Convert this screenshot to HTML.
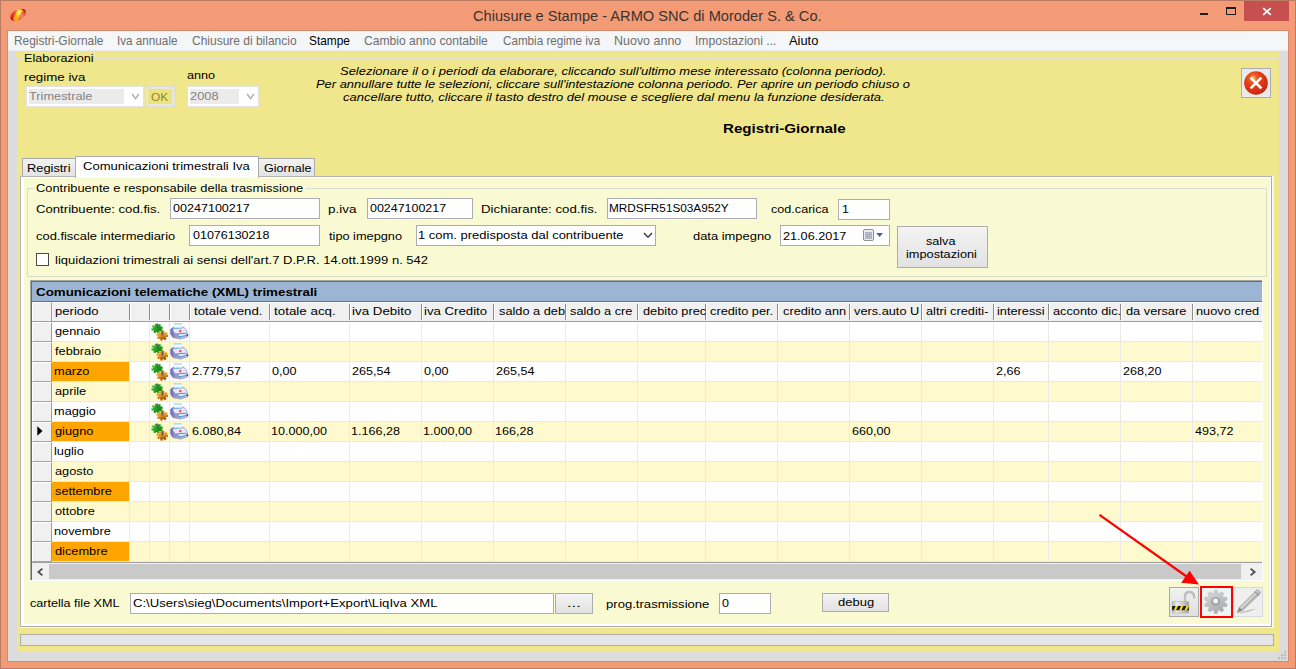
<!DOCTYPE html>
<html><head><meta charset="utf-8"><title>Chiusure e Stampe</title>
<style>
html,body{margin:0;padding:0;}
body{width:1296px;height:669px;overflow:hidden;position:relative;background:#F29B76;font-family:"Liberation Sans", sans-serif;}
body div,body svg{position:absolute;box-sizing:border-box;}
.t{position:absolute;white-space:nowrap;transform-origin:0 50%;}
</style></head><body>
<div style="left:0px;top:0px;width:1296px;height:669px;background:#F29B76;border:1px solid #B97C62;"></div>
<div style="left:7px;top:30px;width:1282px;height:632px;background:#D9896A;"></div>
<div style="left:8px;top:31px;width:1280px;height:20px;background:#F5F6F8;border-bottom:1px solid #E9EAEC;"></div>
<div style="left:8px;top:51px;width:1280px;height:610px;background:#DCDCDC;"></div>
<div style="left:16px;top:51px;width:1264px;height:601px;background:#F0E68C;"></div>
<div style="left:1244px;top:1px;width:45px;height:20px;background:#C84F4F;"></div>
<svg style="left:1262px;top:7px" width="10" height="9" viewBox="0 0 10 9"><path d="M1.2 1.2 L8.8 7.8 M8.8 1.2 L1.2 7.8" stroke="#fff" stroke-width="1.7" fill="none"/></svg>
<div style="left:1226px;top:7px;width:10px;height:8px;border:1px solid #1E1E1E;border-top-width:2px;"></div>
<div style="left:1200px;top:13px;width:8px;height:2px;background:#1E1E1E;"></div>
<svg style="left:8px;top:6px" width="20" height="18" viewBox="8 6 20 18"><defs><linearGradient id="ai1" x1="0" y1="0" x2="1" y2="0"><stop offset="0" stop-color="#E01C1C"/><stop offset="0.35" stop-color="#F04830"/><stop offset="0.7" stop-color="#F28A6A"/><stop offset="1" stop-color="#E22020"/></linearGradient><radialGradient id="ai2" cx="0.62" cy="0.3" r="0.6"><stop offset="0" stop-color="#FFFDE0"/><stop offset="0.3" stop-color="#FFDC20"/><stop offset="1" stop-color="#F8A818"/></radialGradient></defs><ellipse cx="18.1" cy="14.9" rx="8.3" ry="5.3" transform="rotate(-27 18.1 14.9)" fill="url(#ai1)"/><path d="M10.6 17.4 Q11 20 14 20.6 L13 18.8Z" fill="#8E0C0C"/><path d="M21.4 9 Q25.4 8.6 25.8 12 L23.6 10.6Z" fill="#8E0C0C"/><path d="M13.4 18.6 L17 10.4 Q17.6 9.2 19 9.2 L23 10 L22.2 12 L21 12.4 L18.2 19.6 Q17.4 20.8 16 20.6 L13 20Z" fill="url(#ai2)"/><path d="M15.2 9.6 Q18 8.6 21 9.4 L17.6 10Z" fill="#FFC828"/><path d="M14 20.2 Q17 21.6 20.6 19.6 L17.6 20Z" fill="#FFB420"/></svg>
<div style="left:16px;top:58px;width:1264px;height:594px;border:1px solid #DCDCDC;border-bottom:none;"></div>
<div style="left:24px;top:52px;width:71px;height:12px;background:#F0E68C;"></div>
<div style="left:26px;top:86px;width:118px;height:21px;background:#fff;border:1px solid #E2E2E2;"></div>
<div style="left:29px;top:89px;width:95px;height:15px;background:#EBEBEB;"></div>
<svg style="left:131px;top:93px" width="9" height="8" viewBox="0 0 9 8"><path d="M1.2 1 L4.5 5.6 L7.8 1" stroke="#B2B2B2" stroke-width="1.5" fill="none"/></svg>
<div style="left:187px;top:86px;width:72px;height:21px;background:#fff;border:1px solid #E2E2E2;"></div>
<div style="left:190px;top:89px;width:49px;height:15px;background:#EBEBEB;"></div>
<svg style="left:246px;top:93px" width="9" height="8" viewBox="0 0 9 8"><path d="M1.2 1 L4.5 5.6 L7.8 1" stroke="#B2B2B2" stroke-width="1.5" fill="none"/></svg>
<div style="left:145px;top:86px;width:30px;height:21px;background:#EEE47E;border:3px solid #E8E7DC;"></div>
<div style="left:145px;top:86px;width:30px;height:21px;border:1px solid #DDDDD6;"></div>
<div style="left:1241px;top:68px;width:30px;height:30px;background:#EAEAEA;border:1px solid #ABACB6;"></div>
<svg style="left:1244px;top:71px" width="24" height="24" viewBox="0 0 24 24"><defs><radialGradient id="rg" cx="0.38" cy="0.3" r="0.75"><stop offset="0" stop-color="#FBC070"/><stop offset="0.22" stop-color="#EC5A22"/><stop offset="0.45" stop-color="#E23C16"/><stop offset="0.8" stop-color="#D42E12"/><stop offset="1" stop-color="#B8200C"/></radialGradient></defs><circle cx="12" cy="12" r="11.8" fill="url(#rg)"/><path d="M6.6 6.6 L17.4 17.4 M17.4 6.6 L6.6 17.4" stroke="#fff" stroke-width="2.7" fill="none"/></svg>
<div style="left:20px;top:176px;width:1254px;height:452px;background:#F5F5FA;"></div>
<div style="left:20px;top:176px;width:1252px;height:451px;background:#A9A9A9;"></div>
<div style="left:21px;top:177px;width:1250px;height:449px;background:#fff;"></div>
<div style="left:24px;top:178px;width:1246px;height:446px;background:#FAFAD2;"></div>
<div style="left:20px;top:176px;width:1px;height:451px;background:#B4B4B4;"></div>
<div style="left:20px;top:176px;width:1252px;height:1px;background:#B4B4B4;"></div>
<div style="left:22px;top:158px;width:54px;height:19px;border:1px solid #ACACAC;border-bottom:none;background:linear-gradient(#F2F2F2,#E3E3E3);height:18px;"></div>
<div style="left:258px;top:158px;width:57px;height:19px;border:1px solid #ACACAC;border-bottom:none;background:linear-gradient(#F2F2F2,#E3E3E3);height:18px;"></div>
<div style="left:75px;top:156px;width:184px;height:22px;background:#fff;border:1px solid #ACACAC;border-bottom:none;"></div>
<div style="left:27px;top:188px;width:1240px;height:89px;border:1px solid #DCDCD0;"></div>
<div style="left:34px;top:182px;width:272px;height:12px;background:#FAFAD2;"></div>
<div style="left:170px;top:198px;width:150px;height:21px;background:#fff;border:1px solid #ABADB3;"></div>
<div style="left:367px;top:198px;width:106px;height:21px;background:#fff;border:1px solid #ABADB3;"></div>
<div style="left:607px;top:198px;width:150px;height:21px;background:#fff;border:1px solid #ABADB3;"></div>
<div style="left:838px;top:199px;width:52px;height:21px;background:#fff;border:1px solid #ABADB3;"></div>
<div style="left:189px;top:225px;width:131px;height:21px;background:#fff;border:1px solid #ABADB3;"></div>
<div style="left:416px;top:225px;width:240px;height:21px;background:#fff;border:1px solid #ABADB3;"></div>
<svg style="left:643px;top:232px" width="10" height="7" viewBox="0 0 10 7"><path d="M1 1 L5 5.2 L9 1" stroke="#404040" stroke-width="1.6" fill="none"/></svg>
<div style="left:780px;top:225px;width:110px;height:21px;background:#fff;border:1px solid #ABADB3;"></div>
<svg style="left:863px;top:229px" width="21" height="13" viewBox="0 0 21 13"><rect x="0.5" y="0.5" width="10" height="11" rx="1.5" fill="#F4F4F6" stroke="#8E8E96"/><rect x="2.2" y="3.2" width="6.6" height="6.6" fill="#C9CDD8" stroke="#9AA0B0" stroke-width="0.6"/><path d="M2.2 5.4H8.8M2.2 7.6H8.8M4.4 3.2V9.8M6.6 3.2V9.8" stroke="#8E94A6" stroke-width="0.5"/><path d="M13.2 4 H20 L16.6 8 Z" fill="#4E6288"/></svg>
<div style="left:36px;top:253px;width:13px;height:13px;background:#fff;border:1px solid #4A4A4A;"></div>
<div style="left:897px;top:226px;width:91px;height:42px;border:1px solid #ACACAC;background:linear-gradient(#F3F3F3,#E2E2E2);"></div>
<div style="left:30px;top:280px;width:1232px;height:301px;background:#fff;border-left:1px solid #A8A8A0;border-top:1px solid #A8A8A0;"></div>
<div style="left:31px;top:281px;width:1231px;height:300px;border-left:1px solid #6A6A6A;border-top:1px solid #6A6A6A;"></div>
<div style="left:32px;top:282px;width:1230px;height:20px;background:#9CB5D3;border-bottom:1px solid #6E6E6E;"></div>
<div style="left:32px;top:302px;width:1230px;height:19px;background:#F0F0F0;border-top:1px solid #fff;"></div>
<div style="left:32px;top:321px;width:1230px;height:1px;background:#A0A0A0;"></div>
<div style="left:32px;top:341px;width:1230px;height:1px;background:#EAEAEA;"></div>
<div style="left:32px;top:322px;width:20px;height:20px;background:#F0F0F0;border-right:1px solid #9C9C9C;border-bottom:1px solid #A4A4A4;border-top:1px solid #fff;border-left:1px solid #fff;"></div>
<div style="left:52px;top:342px;width:1210px;height:19px;background:#FFFACD;"></div>
<div style="left:32px;top:361px;width:1230px;height:1px;background:#EAEAEA;"></div>
<div style="left:32px;top:342px;width:20px;height:20px;background:#F0F0F0;border-right:1px solid #9C9C9C;border-bottom:1px solid #A4A4A4;border-top:1px solid #fff;border-left:1px solid #fff;"></div>
<div style="left:32px;top:381px;width:1230px;height:1px;background:#EAEAEA;"></div>
<div style="left:32px;top:362px;width:20px;height:20px;background:#F0F0F0;border-right:1px solid #9C9C9C;border-bottom:1px solid #A4A4A4;border-top:1px solid #fff;border-left:1px solid #fff;"></div>
<div style="left:52px;top:362px;width:77px;height:19px;background:#FFA500;"></div>
<div style="left:52px;top:382px;width:1210px;height:19px;background:#FFFACD;"></div>
<div style="left:32px;top:401px;width:1230px;height:1px;background:#EAEAEA;"></div>
<div style="left:32px;top:382px;width:20px;height:20px;background:#F0F0F0;border-right:1px solid #9C9C9C;border-bottom:1px solid #A4A4A4;border-top:1px solid #fff;border-left:1px solid #fff;"></div>
<div style="left:32px;top:421px;width:1230px;height:1px;background:#EAEAEA;"></div>
<div style="left:32px;top:402px;width:20px;height:20px;background:#F0F0F0;border-right:1px solid #9C9C9C;border-bottom:1px solid #A4A4A4;border-top:1px solid #fff;border-left:1px solid #fff;"></div>
<div style="left:52px;top:422px;width:1210px;height:19px;background:#FFFACD;"></div>
<div style="left:32px;top:441px;width:1230px;height:1px;background:#EAEAEA;"></div>
<div style="left:32px;top:422px;width:20px;height:20px;background:#F0F0F0;border-right:1px solid #9C9C9C;border-bottom:1px solid #A4A4A4;border-top:1px solid #fff;border-left:1px solid #fff;"></div>
<div style="left:52px;top:422px;width:77px;height:19px;background:#FFA500;"></div>
<div style="left:32px;top:461px;width:1230px;height:1px;background:#EAEAEA;"></div>
<div style="left:32px;top:442px;width:20px;height:20px;background:#F0F0F0;border-right:1px solid #9C9C9C;border-bottom:1px solid #A4A4A4;border-top:1px solid #fff;border-left:1px solid #fff;"></div>
<div style="left:52px;top:462px;width:1210px;height:19px;background:#FFFACD;"></div>
<div style="left:32px;top:481px;width:1230px;height:1px;background:#EAEAEA;"></div>
<div style="left:32px;top:462px;width:20px;height:20px;background:#F0F0F0;border-right:1px solid #9C9C9C;border-bottom:1px solid #A4A4A4;border-top:1px solid #fff;border-left:1px solid #fff;"></div>
<div style="left:32px;top:501px;width:1230px;height:1px;background:#EAEAEA;"></div>
<div style="left:32px;top:482px;width:20px;height:20px;background:#F0F0F0;border-right:1px solid #9C9C9C;border-bottom:1px solid #A4A4A4;border-top:1px solid #fff;border-left:1px solid #fff;"></div>
<div style="left:52px;top:482px;width:77px;height:19px;background:#FFA500;"></div>
<div style="left:52px;top:502px;width:1210px;height:19px;background:#FFFACD;"></div>
<div style="left:32px;top:521px;width:1230px;height:1px;background:#EAEAEA;"></div>
<div style="left:32px;top:502px;width:20px;height:20px;background:#F0F0F0;border-right:1px solid #9C9C9C;border-bottom:1px solid #A4A4A4;border-top:1px solid #fff;border-left:1px solid #fff;"></div>
<div style="left:32px;top:541px;width:1230px;height:1px;background:#EAEAEA;"></div>
<div style="left:32px;top:522px;width:20px;height:20px;background:#F0F0F0;border-right:1px solid #9C9C9C;border-bottom:1px solid #A4A4A4;border-top:1px solid #fff;border-left:1px solid #fff;"></div>
<div style="left:52px;top:542px;width:1210px;height:19px;background:#FFFACD;"></div>
<div style="left:32px;top:561px;width:1230px;height:1px;background:#EAEAEA;"></div>
<div style="left:32px;top:542px;width:20px;height:20px;background:#F0F0F0;border-right:1px solid #9C9C9C;border-bottom:1px solid #A4A4A4;border-top:1px solid #fff;border-left:1px solid #fff;"></div>
<div style="left:52px;top:542px;width:77px;height:19px;background:#FFA500;"></div>
<div style="left:129px;top:322px;width:1px;height:240px;background:#EAEAEA;"></div>
<div style="left:149px;top:322px;width:1px;height:240px;background:#EAEAEA;"></div>
<div style="left:169px;top:322px;width:1px;height:240px;background:#EAEAEA;"></div>
<div style="left:189px;top:322px;width:1px;height:240px;background:#EAEAEA;"></div>
<div style="left:269px;top:322px;width:1px;height:240px;background:#EAEAEA;"></div>
<div style="left:349px;top:322px;width:1px;height:240px;background:#EAEAEA;"></div>
<div style="left:421px;top:322px;width:1px;height:240px;background:#EAEAEA;"></div>
<div style="left:493px;top:322px;width:1px;height:240px;background:#EAEAEA;"></div>
<div style="left:565px;top:322px;width:1px;height:240px;background:#EAEAEA;"></div>
<div style="left:637px;top:322px;width:1px;height:240px;background:#EAEAEA;"></div>
<div style="left:705px;top:322px;width:1px;height:240px;background:#EAEAEA;"></div>
<div style="left:777px;top:322px;width:1px;height:240px;background:#EAEAEA;"></div>
<div style="left:849px;top:322px;width:1px;height:240px;background:#EAEAEA;"></div>
<div style="left:921px;top:322px;width:1px;height:240px;background:#EAEAEA;"></div>
<div style="left:993px;top:322px;width:1px;height:240px;background:#EAEAEA;"></div>
<div style="left:1048px;top:322px;width:1px;height:240px;background:#EAEAEA;"></div>
<div style="left:1120px;top:322px;width:1px;height:240px;background:#EAEAEA;"></div>
<div style="left:1192px;top:322px;width:1px;height:240px;background:#EAEAEA;"></div>
<div style="left:129px;top:304px;width:2px;height:16px;border-left:1px solid #8C8C8C;border-right:1px solid #fff;"></div>
<div style="left:149px;top:304px;width:2px;height:16px;border-left:1px solid #8C8C8C;border-right:1px solid #fff;"></div>
<div style="left:169px;top:304px;width:2px;height:16px;border-left:1px solid #8C8C8C;border-right:1px solid #fff;"></div>
<div style="left:189px;top:304px;width:2px;height:16px;border-left:1px solid #8C8C8C;border-right:1px solid #fff;"></div>
<div style="left:269px;top:304px;width:2px;height:16px;border-left:1px solid #8C8C8C;border-right:1px solid #fff;"></div>
<div style="left:349px;top:304px;width:2px;height:16px;border-left:1px solid #8C8C8C;border-right:1px solid #fff;"></div>
<div style="left:421px;top:304px;width:2px;height:16px;border-left:1px solid #8C8C8C;border-right:1px solid #fff;"></div>
<div style="left:493px;top:304px;width:2px;height:16px;border-left:1px solid #8C8C8C;border-right:1px solid #fff;"></div>
<div style="left:565px;top:304px;width:2px;height:16px;border-left:1px solid #8C8C8C;border-right:1px solid #fff;"></div>
<div style="left:637px;top:304px;width:2px;height:16px;border-left:1px solid #8C8C8C;border-right:1px solid #fff;"></div>
<div style="left:705px;top:304px;width:2px;height:16px;border-left:1px solid #8C8C8C;border-right:1px solid #fff;"></div>
<div style="left:777px;top:304px;width:2px;height:16px;border-left:1px solid #8C8C8C;border-right:1px solid #fff;"></div>
<div style="left:849px;top:304px;width:2px;height:16px;border-left:1px solid #8C8C8C;border-right:1px solid #fff;"></div>
<div style="left:921px;top:304px;width:2px;height:16px;border-left:1px solid #8C8C8C;border-right:1px solid #fff;"></div>
<div style="left:993px;top:304px;width:2px;height:16px;border-left:1px solid #8C8C8C;border-right:1px solid #fff;"></div>
<div style="left:1048px;top:304px;width:2px;height:16px;border-left:1px solid #8C8C8C;border-right:1px solid #fff;"></div>
<div style="left:1120px;top:304px;width:2px;height:16px;border-left:1px solid #8C8C8C;border-right:1px solid #fff;"></div>
<div style="left:1192px;top:304px;width:2px;height:16px;border-left:1px solid #8C8C8C;border-right:1px solid #fff;"></div>
<div style="left:32px;top:302px;width:20px;height:19px;background:#F0F0F0;border-right:1px solid #A0A0A0;border-top:1px solid #fff;border-left:1px solid #fff;"></div>
<svg style="left:37px;top:426px" width="6" height="10" viewBox="0 0 6 10"><path d="M0.3 0.3 L5.5 5 L0.3 9.7Z" fill="#000"/></svg>
<svg style="left:150px;top:323px" width="19" height="18" viewBox="0 0 19 18"><defs><linearGradient id="g1_0" x1="0" y1="0" x2="1" y2="0.6"><stop offset="0" stop-color="#5AD24E"/><stop offset="0.55" stop-color="#1FA31C"/><stop offset="1" stop-color="#0E8A10"/></linearGradient><linearGradient id="g2_0" x1="0" y1="0" x2="0.3" y2="1"><stop offset="0" stop-color="#F5B032"/><stop offset="0.6" stop-color="#E29A1E"/><stop offset="1" stop-color="#A85810"/></linearGradient></defs><g transform="translate(7 5.4) scale(1 0.86)"><circle r="4.2" fill="url(#g1_0)"/><circle r="4.7" fill="none" stroke="url(#g1_0)" stroke-width="2.2" stroke-dasharray="2.3 1.39" transform="rotate(12)"/></g><rect x="6.5" y="0.7" width="1.7" height="4.8" fill="#5A5A62"/><g transform="translate(12.2 12.5) scale(1 0.88)"><circle r="4.2" fill="url(#g2_0)"/><circle r="4.7" fill="none" stroke="url(#g2_0)" stroke-width="2.2" stroke-dasharray="2.3 1.39" transform="rotate(-8)"/></g><rect x="11.5" y="7.8" width="1.8" height="4.8" fill="#5A5A62"/></svg>
<svg style="left:170px;top:323px" width="19" height="18" viewBox="0 0 19 18"><defs><linearGradient id="p1_0" x1="0" y1="0" x2="0" y2="1"><stop offset="0" stop-color="#BFE4FA"/><stop offset="0.35" stop-color="#FFFFFF"/><stop offset="0.7" stop-color="#D8EEFC"/><stop offset="1" stop-color="#3E9AE4"/></linearGradient><linearGradient id="p2_0" x1="0" y1="0" x2="1" y2="0"><stop offset="0" stop-color="#6464AE"/><stop offset="0.22" stop-color="#8C8CC8"/><stop offset="1" stop-color="#D6D6EE"/></linearGradient></defs><path d="M1.4 5.4 L4 4 L13.6 4 L16.4 7 L17.8 11.2 L17.6 13.6 L10.6 15.8 L2.6 14.4 L0.6 11 L0.4 6.8Z" fill="url(#p2_0)" stroke="#7C7CB8" stroke-width="0.5"/><path d="M3.4 5.6 L13.8 5 L16.4 8.4 L15.8 9.6 L5.6 10.6 L3.2 8Z" fill="#E6E6F6"/><path d="M3.6 0.8 L11.8 0.8 L12.4 5.4 L4.2 5.8Z" fill="url(#p1_0)"/><path d="M3.6 0.8 L11.8 0.8" stroke="#9CCCF0" stroke-width="0.9"/><circle cx="10.3" cy="8.2" r="1.15" fill="#EE3434"/><path d="M6.6 11 L15.4 10 L17.6 12.4 L9.6 14.6Z" fill="#55558E"/><path d="M7.2 11.6 L15.6 10.6 L16.8 12.6 L10.2 14.2Z" fill="#DDF2FE"/><path d="M7.6 12.4 L9.8 14.1 L16.6 12.7 L16.4 12 L10 13.2Z" fill="#2F8FE2"/><path d="M17 10.4 L18.2 12.6 L17.8 13.8 L16.8 11.6Z" fill="#2C2C7C"/><path d="M3 14.8 L10.6 16.2 L17 14.2" stroke="#B4B4BC" stroke-width="0.9" fill="none"/></svg>
<svg style="left:150px;top:343px" width="19" height="18" viewBox="0 0 19 18"><defs><linearGradient id="g1_1" x1="0" y1="0" x2="1" y2="0.6"><stop offset="0" stop-color="#5AD24E"/><stop offset="0.55" stop-color="#1FA31C"/><stop offset="1" stop-color="#0E8A10"/></linearGradient><linearGradient id="g2_1" x1="0" y1="0" x2="0.3" y2="1"><stop offset="0" stop-color="#F5B032"/><stop offset="0.6" stop-color="#E29A1E"/><stop offset="1" stop-color="#A85810"/></linearGradient></defs><g transform="translate(7 5.4) scale(1 0.86)"><circle r="4.2" fill="url(#g1_1)"/><circle r="4.7" fill="none" stroke="url(#g1_1)" stroke-width="2.2" stroke-dasharray="2.3 1.39" transform="rotate(12)"/></g><rect x="6.5" y="0.7" width="1.7" height="4.8" fill="#5A5A62"/><g transform="translate(12.2 12.5) scale(1 0.88)"><circle r="4.2" fill="url(#g2_1)"/><circle r="4.7" fill="none" stroke="url(#g2_1)" stroke-width="2.2" stroke-dasharray="2.3 1.39" transform="rotate(-8)"/></g><rect x="11.5" y="7.8" width="1.8" height="4.8" fill="#5A5A62"/></svg>
<svg style="left:170px;top:343px" width="19" height="18" viewBox="0 0 19 18"><defs><linearGradient id="p1_1" x1="0" y1="0" x2="0" y2="1"><stop offset="0" stop-color="#BFE4FA"/><stop offset="0.35" stop-color="#FFFFFF"/><stop offset="0.7" stop-color="#D8EEFC"/><stop offset="1" stop-color="#3E9AE4"/></linearGradient><linearGradient id="p2_1" x1="0" y1="0" x2="1" y2="0"><stop offset="0" stop-color="#6464AE"/><stop offset="0.22" stop-color="#8C8CC8"/><stop offset="1" stop-color="#D6D6EE"/></linearGradient></defs><path d="M1.4 5.4 L4 4 L13.6 4 L16.4 7 L17.8 11.2 L17.6 13.6 L10.6 15.8 L2.6 14.4 L0.6 11 L0.4 6.8Z" fill="url(#p2_1)" stroke="#7C7CB8" stroke-width="0.5"/><path d="M3.4 5.6 L13.8 5 L16.4 8.4 L15.8 9.6 L5.6 10.6 L3.2 8Z" fill="#E6E6F6"/><path d="M3.6 0.8 L11.8 0.8 L12.4 5.4 L4.2 5.8Z" fill="url(#p1_1)"/><path d="M3.6 0.8 L11.8 0.8" stroke="#9CCCF0" stroke-width="0.9"/><circle cx="10.3" cy="8.2" r="1.15" fill="#EE3434"/><path d="M6.6 11 L15.4 10 L17.6 12.4 L9.6 14.6Z" fill="#55558E"/><path d="M7.2 11.6 L15.6 10.6 L16.8 12.6 L10.2 14.2Z" fill="#DDF2FE"/><path d="M7.6 12.4 L9.8 14.1 L16.6 12.7 L16.4 12 L10 13.2Z" fill="#2F8FE2"/><path d="M17 10.4 L18.2 12.6 L17.8 13.8 L16.8 11.6Z" fill="#2C2C7C"/><path d="M3 14.8 L10.6 16.2 L17 14.2" stroke="#B4B4BC" stroke-width="0.9" fill="none"/></svg>
<svg style="left:150px;top:363px" width="19" height="18" viewBox="0 0 19 18"><defs><linearGradient id="g1_2" x1="0" y1="0" x2="1" y2="0.6"><stop offset="0" stop-color="#5AD24E"/><stop offset="0.55" stop-color="#1FA31C"/><stop offset="1" stop-color="#0E8A10"/></linearGradient><linearGradient id="g2_2" x1="0" y1="0" x2="0.3" y2="1"><stop offset="0" stop-color="#F5B032"/><stop offset="0.6" stop-color="#E29A1E"/><stop offset="1" stop-color="#A85810"/></linearGradient></defs><g transform="translate(7 5.4) scale(1 0.86)"><circle r="4.2" fill="url(#g1_2)"/><circle r="4.7" fill="none" stroke="url(#g1_2)" stroke-width="2.2" stroke-dasharray="2.3 1.39" transform="rotate(12)"/></g><rect x="6.5" y="0.7" width="1.7" height="4.8" fill="#5A5A62"/><g transform="translate(12.2 12.5) scale(1 0.88)"><circle r="4.2" fill="url(#g2_2)"/><circle r="4.7" fill="none" stroke="url(#g2_2)" stroke-width="2.2" stroke-dasharray="2.3 1.39" transform="rotate(-8)"/></g><rect x="11.5" y="7.8" width="1.8" height="4.8" fill="#5A5A62"/></svg>
<svg style="left:170px;top:363px" width="19" height="18" viewBox="0 0 19 18"><defs><linearGradient id="p1_2" x1="0" y1="0" x2="0" y2="1"><stop offset="0" stop-color="#BFE4FA"/><stop offset="0.35" stop-color="#FFFFFF"/><stop offset="0.7" stop-color="#D8EEFC"/><stop offset="1" stop-color="#3E9AE4"/></linearGradient><linearGradient id="p2_2" x1="0" y1="0" x2="1" y2="0"><stop offset="0" stop-color="#6464AE"/><stop offset="0.22" stop-color="#8C8CC8"/><stop offset="1" stop-color="#D6D6EE"/></linearGradient></defs><path d="M1.4 5.4 L4 4 L13.6 4 L16.4 7 L17.8 11.2 L17.6 13.6 L10.6 15.8 L2.6 14.4 L0.6 11 L0.4 6.8Z" fill="url(#p2_2)" stroke="#7C7CB8" stroke-width="0.5"/><path d="M3.4 5.6 L13.8 5 L16.4 8.4 L15.8 9.6 L5.6 10.6 L3.2 8Z" fill="#E6E6F6"/><path d="M3.6 0.8 L11.8 0.8 L12.4 5.4 L4.2 5.8Z" fill="url(#p1_2)"/><path d="M3.6 0.8 L11.8 0.8" stroke="#9CCCF0" stroke-width="0.9"/><circle cx="10.3" cy="8.2" r="1.15" fill="#EE3434"/><path d="M6.6 11 L15.4 10 L17.6 12.4 L9.6 14.6Z" fill="#55558E"/><path d="M7.2 11.6 L15.6 10.6 L16.8 12.6 L10.2 14.2Z" fill="#DDF2FE"/><path d="M7.6 12.4 L9.8 14.1 L16.6 12.7 L16.4 12 L10 13.2Z" fill="#2F8FE2"/><path d="M17 10.4 L18.2 12.6 L17.8 13.8 L16.8 11.6Z" fill="#2C2C7C"/><path d="M3 14.8 L10.6 16.2 L17 14.2" stroke="#B4B4BC" stroke-width="0.9" fill="none"/></svg>
<svg style="left:150px;top:383px" width="19" height="18" viewBox="0 0 19 18"><defs><linearGradient id="g1_3" x1="0" y1="0" x2="1" y2="0.6"><stop offset="0" stop-color="#5AD24E"/><stop offset="0.55" stop-color="#1FA31C"/><stop offset="1" stop-color="#0E8A10"/></linearGradient><linearGradient id="g2_3" x1="0" y1="0" x2="0.3" y2="1"><stop offset="0" stop-color="#F5B032"/><stop offset="0.6" stop-color="#E29A1E"/><stop offset="1" stop-color="#A85810"/></linearGradient></defs><g transform="translate(7 5.4) scale(1 0.86)"><circle r="4.2" fill="url(#g1_3)"/><circle r="4.7" fill="none" stroke="url(#g1_3)" stroke-width="2.2" stroke-dasharray="2.3 1.39" transform="rotate(12)"/></g><rect x="6.5" y="0.7" width="1.7" height="4.8" fill="#5A5A62"/><g transform="translate(12.2 12.5) scale(1 0.88)"><circle r="4.2" fill="url(#g2_3)"/><circle r="4.7" fill="none" stroke="url(#g2_3)" stroke-width="2.2" stroke-dasharray="2.3 1.39" transform="rotate(-8)"/></g><rect x="11.5" y="7.8" width="1.8" height="4.8" fill="#5A5A62"/></svg>
<svg style="left:170px;top:383px" width="19" height="18" viewBox="0 0 19 18"><defs><linearGradient id="p1_3" x1="0" y1="0" x2="0" y2="1"><stop offset="0" stop-color="#BFE4FA"/><stop offset="0.35" stop-color="#FFFFFF"/><stop offset="0.7" stop-color="#D8EEFC"/><stop offset="1" stop-color="#3E9AE4"/></linearGradient><linearGradient id="p2_3" x1="0" y1="0" x2="1" y2="0"><stop offset="0" stop-color="#6464AE"/><stop offset="0.22" stop-color="#8C8CC8"/><stop offset="1" stop-color="#D6D6EE"/></linearGradient></defs><path d="M1.4 5.4 L4 4 L13.6 4 L16.4 7 L17.8 11.2 L17.6 13.6 L10.6 15.8 L2.6 14.4 L0.6 11 L0.4 6.8Z" fill="url(#p2_3)" stroke="#7C7CB8" stroke-width="0.5"/><path d="M3.4 5.6 L13.8 5 L16.4 8.4 L15.8 9.6 L5.6 10.6 L3.2 8Z" fill="#E6E6F6"/><path d="M3.6 0.8 L11.8 0.8 L12.4 5.4 L4.2 5.8Z" fill="url(#p1_3)"/><path d="M3.6 0.8 L11.8 0.8" stroke="#9CCCF0" stroke-width="0.9"/><circle cx="10.3" cy="8.2" r="1.15" fill="#EE3434"/><path d="M6.6 11 L15.4 10 L17.6 12.4 L9.6 14.6Z" fill="#55558E"/><path d="M7.2 11.6 L15.6 10.6 L16.8 12.6 L10.2 14.2Z" fill="#DDF2FE"/><path d="M7.6 12.4 L9.8 14.1 L16.6 12.7 L16.4 12 L10 13.2Z" fill="#2F8FE2"/><path d="M17 10.4 L18.2 12.6 L17.8 13.8 L16.8 11.6Z" fill="#2C2C7C"/><path d="M3 14.8 L10.6 16.2 L17 14.2" stroke="#B4B4BC" stroke-width="0.9" fill="none"/></svg>
<svg style="left:150px;top:403px" width="19" height="18" viewBox="0 0 19 18"><defs><linearGradient id="g1_4" x1="0" y1="0" x2="1" y2="0.6"><stop offset="0" stop-color="#5AD24E"/><stop offset="0.55" stop-color="#1FA31C"/><stop offset="1" stop-color="#0E8A10"/></linearGradient><linearGradient id="g2_4" x1="0" y1="0" x2="0.3" y2="1"><stop offset="0" stop-color="#F5B032"/><stop offset="0.6" stop-color="#E29A1E"/><stop offset="1" stop-color="#A85810"/></linearGradient></defs><g transform="translate(7 5.4) scale(1 0.86)"><circle r="4.2" fill="url(#g1_4)"/><circle r="4.7" fill="none" stroke="url(#g1_4)" stroke-width="2.2" stroke-dasharray="2.3 1.39" transform="rotate(12)"/></g><rect x="6.5" y="0.7" width="1.7" height="4.8" fill="#5A5A62"/><g transform="translate(12.2 12.5) scale(1 0.88)"><circle r="4.2" fill="url(#g2_4)"/><circle r="4.7" fill="none" stroke="url(#g2_4)" stroke-width="2.2" stroke-dasharray="2.3 1.39" transform="rotate(-8)"/></g><rect x="11.5" y="7.8" width="1.8" height="4.8" fill="#5A5A62"/></svg>
<svg style="left:170px;top:403px" width="19" height="18" viewBox="0 0 19 18"><defs><linearGradient id="p1_4" x1="0" y1="0" x2="0" y2="1"><stop offset="0" stop-color="#BFE4FA"/><stop offset="0.35" stop-color="#FFFFFF"/><stop offset="0.7" stop-color="#D8EEFC"/><stop offset="1" stop-color="#3E9AE4"/></linearGradient><linearGradient id="p2_4" x1="0" y1="0" x2="1" y2="0"><stop offset="0" stop-color="#6464AE"/><stop offset="0.22" stop-color="#8C8CC8"/><stop offset="1" stop-color="#D6D6EE"/></linearGradient></defs><path d="M1.4 5.4 L4 4 L13.6 4 L16.4 7 L17.8 11.2 L17.6 13.6 L10.6 15.8 L2.6 14.4 L0.6 11 L0.4 6.8Z" fill="url(#p2_4)" stroke="#7C7CB8" stroke-width="0.5"/><path d="M3.4 5.6 L13.8 5 L16.4 8.4 L15.8 9.6 L5.6 10.6 L3.2 8Z" fill="#E6E6F6"/><path d="M3.6 0.8 L11.8 0.8 L12.4 5.4 L4.2 5.8Z" fill="url(#p1_4)"/><path d="M3.6 0.8 L11.8 0.8" stroke="#9CCCF0" stroke-width="0.9"/><circle cx="10.3" cy="8.2" r="1.15" fill="#EE3434"/><path d="M6.6 11 L15.4 10 L17.6 12.4 L9.6 14.6Z" fill="#55558E"/><path d="M7.2 11.6 L15.6 10.6 L16.8 12.6 L10.2 14.2Z" fill="#DDF2FE"/><path d="M7.6 12.4 L9.8 14.1 L16.6 12.7 L16.4 12 L10 13.2Z" fill="#2F8FE2"/><path d="M17 10.4 L18.2 12.6 L17.8 13.8 L16.8 11.6Z" fill="#2C2C7C"/><path d="M3 14.8 L10.6 16.2 L17 14.2" stroke="#B4B4BC" stroke-width="0.9" fill="none"/></svg>
<svg style="left:150px;top:423px" width="19" height="18" viewBox="0 0 19 18"><defs><linearGradient id="g1_5" x1="0" y1="0" x2="1" y2="0.6"><stop offset="0" stop-color="#5AD24E"/><stop offset="0.55" stop-color="#1FA31C"/><stop offset="1" stop-color="#0E8A10"/></linearGradient><linearGradient id="g2_5" x1="0" y1="0" x2="0.3" y2="1"><stop offset="0" stop-color="#F5B032"/><stop offset="0.6" stop-color="#E29A1E"/><stop offset="1" stop-color="#A85810"/></linearGradient></defs><g transform="translate(7 5.4) scale(1 0.86)"><circle r="4.2" fill="url(#g1_5)"/><circle r="4.7" fill="none" stroke="url(#g1_5)" stroke-width="2.2" stroke-dasharray="2.3 1.39" transform="rotate(12)"/></g><rect x="6.5" y="0.7" width="1.7" height="4.8" fill="#5A5A62"/><g transform="translate(12.2 12.5) scale(1 0.88)"><circle r="4.2" fill="url(#g2_5)"/><circle r="4.7" fill="none" stroke="url(#g2_5)" stroke-width="2.2" stroke-dasharray="2.3 1.39" transform="rotate(-8)"/></g><rect x="11.5" y="7.8" width="1.8" height="4.8" fill="#5A5A62"/></svg>
<svg style="left:170px;top:423px" width="19" height="18" viewBox="0 0 19 18"><defs><linearGradient id="p1_5" x1="0" y1="0" x2="0" y2="1"><stop offset="0" stop-color="#BFE4FA"/><stop offset="0.35" stop-color="#FFFFFF"/><stop offset="0.7" stop-color="#D8EEFC"/><stop offset="1" stop-color="#3E9AE4"/></linearGradient><linearGradient id="p2_5" x1="0" y1="0" x2="1" y2="0"><stop offset="0" stop-color="#6464AE"/><stop offset="0.22" stop-color="#8C8CC8"/><stop offset="1" stop-color="#D6D6EE"/></linearGradient></defs><path d="M1.4 5.4 L4 4 L13.6 4 L16.4 7 L17.8 11.2 L17.6 13.6 L10.6 15.8 L2.6 14.4 L0.6 11 L0.4 6.8Z" fill="url(#p2_5)" stroke="#7C7CB8" stroke-width="0.5"/><path d="M3.4 5.6 L13.8 5 L16.4 8.4 L15.8 9.6 L5.6 10.6 L3.2 8Z" fill="#E6E6F6"/><path d="M3.6 0.8 L11.8 0.8 L12.4 5.4 L4.2 5.8Z" fill="url(#p1_5)"/><path d="M3.6 0.8 L11.8 0.8" stroke="#9CCCF0" stroke-width="0.9"/><circle cx="10.3" cy="8.2" r="1.15" fill="#EE3434"/><path d="M6.6 11 L15.4 10 L17.6 12.4 L9.6 14.6Z" fill="#55558E"/><path d="M7.2 11.6 L15.6 10.6 L16.8 12.6 L10.2 14.2Z" fill="#DDF2FE"/><path d="M7.6 12.4 L9.8 14.1 L16.6 12.7 L16.4 12 L10 13.2Z" fill="#2F8FE2"/><path d="M17 10.4 L18.2 12.6 L17.8 13.8 L16.8 11.6Z" fill="#2C2C7C"/><path d="M3 14.8 L10.6 16.2 L17 14.2" stroke="#B4B4BC" stroke-width="0.9" fill="none"/></svg>
<div style="left:32px;top:562px;width:1230px;height:1px;background:#A0A0A0;"></div>
<div style="left:32px;top:563px;width:1230px;height:17px;background:#F0F0F0;"></div>
<div style="left:49px;top:564px;width:1192px;height:15px;background:#C9C9C9;"></div>
<svg style="left:36px;top:567px" width="8" height="10" viewBox="0 0 8 10"><path d="M6.4 1.6 L2.4 5 L6.4 8.4" stroke="#505050" stroke-width="1.9" fill="none"/></svg>
<svg style="left:1249px;top:567px" width="8" height="10" viewBox="0 0 8 10"><path d="M1.6 1.6 L5.6 5 L1.6 8.4" stroke="#505050" stroke-width="1.9" fill="none"/></svg>
<div style="left:30px;top:580px;width:1233px;height:1px;background:#fff;"></div>
<div style="left:1262px;top:280px;width:1px;height:301px;background:#fff;"></div>
<div style="left:130px;top:593px;width:424px;height:21px;background:#fff;border:1px solid #ABADB3;"></div>
<div style="left:555px;top:593px;width:38px;height:21px;border:1px solid #ACACAC;background:linear-gradient(#F3F3F3,#E2E2E2);"></div>
<div style="left:719px;top:593px;width:52px;height:21px;background:#fff;border:1px solid #ABADB3;"></div>
<div style="left:822px;top:593px;width:67px;height:19px;border:1px solid #ACACAC;background:linear-gradient(#F3F3F3,#E2E2E2);"></div>
<div style="left:1169px;top:587px;width:30px;height:30px;border:1px solid #A9A9A9;background:linear-gradient(#F1F1F1,#DFDFDF);"></div>
<div style="left:1201px;top:587px;width:31px;height:30px;background:#EEF3F3;"></div>
<div style="left:1200px;top:586px;width:33px;height:32px;border:2px solid #FF0000;"></div>
<div style="left:1233px;top:587px;width:30px;height:30px;border:1px solid #D6DADE;background:#EFEFEF;"></div>
<svg style="left:1171px;top:589px" width="26" height="26" viewBox="0 0 26 26"><defs><linearGradient id="lk" x1="0" y1="0" x2="1" y2="0"><stop offset="0" stop-color="#B0B0B0"/><stop offset="0.25" stop-color="#EDEDED"/><stop offset="0.7" stop-color="#C4C4C4"/><stop offset="1" stop-color="#9C9C9C"/></linearGradient></defs><path d="M14 13 V7.8 Q14 2.8 18.6 2.8 Q23.2 2.8 23.4 9.4" fill="none" stroke="#9A9A9A" stroke-width="2.2"/><path d="M14 13 V7.8 Q14 2.8 18.6 2.8 Q23.2 2.8 23.4 9.4" fill="none" stroke="#E6E6E6" stroke-width="1"/><rect x="1.2" y="12.4" width="16.6" height="11.6" rx="1.2" fill="url(#lk)" stroke="#A6A6A6" stroke-width="0.5"/><rect x="1.2" y="17" width="16.6" height="4.2" fill="#161616"/><path d="M2.6 21.2 L4.6 17 H7 L5 21.2Z M8 21.2 L10 17 H12.4 L10.4 21.2Z M13.4 21.2 L15.4 17 H17.8 V17.4 L15.8 21.2Z" fill="#F8DC10"/></svg>
<svg style="left:1203px;top:589px" width="26" height="26" viewBox="-13 -13 26 26"><defs><linearGradient id="gg" x1="0.2" y1="0" x2="0.7" y2="1"><stop offset="0" stop-color="#D8D8D8"/><stop offset="1" stop-color="#A8A8A8"/></linearGradient><radialGradient id="gh" cx="0.5" cy="0.45" r="0.6"><stop offset="0.45" stop-color="#9A9A9A"/><stop offset="1" stop-color="#C2C2C2"/></radialGradient></defs><path d="M-1.98 -8.57 L-1.52 -11.50 L1.52 -11.50 L1.98 -8.57 L3.44 -8.10 L5.53 -10.20 L7.99 -8.41 L6.64 -5.77 L7.54 -4.53 L10.47 -5.00 L11.41 -2.11 L8.77 -0.77 L8.77 0.77 L11.41 2.11 L10.47 5.00 L7.54 4.53 L6.64 5.77 L7.99 8.41 L5.53 10.20 L3.44 8.10 L1.98 8.57 L1.52 11.50 L-1.52 11.50 L-1.98 8.57 L-3.44 8.10 L-5.53 10.20 L-7.99 8.41 L-6.64 5.77 L-7.54 4.53 L-10.47 5.00 L-11.41 2.11 L-8.77 0.77 L-8.77 -0.77 L-11.41 -2.11 L-10.47 -5.00 L-7.54 -4.53 L-6.64 -5.77 L-7.99 -8.41 L-5.53 -10.20 L-3.44 -8.10Z" fill="url(#gg)" stroke="#B2B2B2" stroke-width="0.5" transform="translate(-0.2 -0.1)"/><circle r="5" cx="-0.3" cy="-0.1" fill="url(#gh)"/><circle r="2.5" cx="-0.4" cy="-0.9" fill="#F4F4F4"/></svg>
<svg style="left:1235px;top:588px" width="28" height="28" viewBox="1235 588 28 28"><path d="M1238 613.6 Q1246 609.6 1256.6 608.4 Q1250 612.4 1238 613.6Z" fill="#C4C4C4"/><path d="M1239.4 607.2 L1256.6 590 Q1257.8 589.2 1258.8 590.2 L1260.4 591.8 Q1261 592.8 1260.2 593.8 L1242.4 610.6 L1237.2 612.6Z" fill="#BEBEBE" stroke="#A4A4A4" stroke-width="0.6"/><path d="M1240.6 608.6 L1258 591.4" stroke="#DADADA" stroke-width="1.3"/><path d="M1242 610 L1259.6 592.8" stroke="#A6A6A6" stroke-width="1"/><path d="M1255 591.6 L1258.8 595.4" stroke="#9A9A9A" stroke-width="1.4"/><path d="M1237.2 612.6 L1239.4 607.2 L1242.4 610.6Z" fill="#8E8E8E"/></svg>
<svg style="left:1090px;top:505px" width="120" height="90" viewBox="1090 505 120 90"><path d="M1099.5 514.8 L1188 577.5" stroke="#FF0000" stroke-width="2.2" fill="none"/><path d="M1199 584.6 L1189.6 570.8 L1181.2 582.8Z" fill="#FF0000"/></svg>
<div style="left:20px;top:634px;width:1254px;height:12px;background:#E5E5E5;border:1px solid #ADADAD;"></div>
<div style="left:1284px;top:651px;width:2px;height:2px;background:#BABABA;"></div>
<div style="left:1281px;top:654px;width:2px;height:2px;background:#BABABA;"></div>
<div style="left:1284px;top:654px;width:2px;height:2px;background:#BABABA;"></div>
<div style="left:1278px;top:657px;width:2px;height:2px;background:#BABABA;"></div>
<div style="left:1281px;top:657px;width:2px;height:2px;background:#BABABA;"></div>
<div style="left:1284px;top:657px;width:2px;height:2px;background:#BABABA;"></div>
<span class="t" style="left:473.04px;top:5px;font-size:15.3px;line-height:21px;font-weight:normal;font-style:normal;color:#3A3330;transform:scaleX(0.9559);">Chiusure e Stampe - ARMO SNC di Moroder S. &amp; Co.</span>
<span class="t" style="left:14.02px;top:32px;font-size:12.2px;line-height:18px;font-weight:normal;font-style:normal;color:#6E6E6E;transform:scaleX(0.9778);">Registri-Giornale</span>
<span class="t" style="left:116.54px;top:32px;font-size:12.2px;line-height:18px;font-weight:normal;font-style:normal;color:#6E6E6E;transform:scaleX(0.9597);">Iva annuale</span>
<span class="t" style="left:191.50px;top:32px;font-size:12.2px;line-height:18px;font-weight:normal;font-style:normal;color:#6E6E6E;transform:scaleX(0.9830);">Chiusure di bilancio</span>
<span class="t" style="left:309.02px;top:32px;font-size:12.2px;line-height:18px;font-weight:normal;font-style:normal;color:#000;transform:scaleX(0.9756);">Stampe</span>
<span class="t" style="left:364.00px;top:32px;font-size:12.2px;line-height:18px;font-weight:normal;font-style:normal;color:#6E6E6E;transform:scaleX(0.9935);">Cambio anno contabile</span>
<span class="t" style="left:502.50px;top:32px;font-size:12.2px;line-height:18px;font-weight:normal;font-style:normal;color:#6E6E6E;transform:scaleX(0.9559);">Cambia regime iva</span>
<span class="t" style="left:613.98px;top:32px;font-size:12.2px;line-height:18px;font-weight:normal;font-style:normal;color:#6E6E6E;transform:scaleX(1.0234);">Nuovo anno</span>
<span class="t" style="left:694.51px;top:32px;font-size:12.2px;line-height:18px;font-weight:normal;font-style:normal;color:#6E6E6E;transform:scaleX(0.9938);">Impostazioni ...</span>
<span class="t" style="left:789.00px;top:32px;font-size:12.2px;line-height:18px;font-weight:normal;font-style:normal;color:#000;transform:scaleX(1.0556);">Aiuto</span>
<span class="t" style="left:24.30px;top:50px;font-size:11.5px;line-height:16px;font-weight:normal;font-style:normal;color:#000;transform:scaleX(1.1000);">Elaborazioni</span>
<span class="t" style="left:24.24px;top:69px;font-size:11.5px;line-height:16px;font-weight:normal;font-style:normal;color:#000;transform:scaleX(1.1577);">regime iva</span>
<span class="t" style="left:187.30px;top:67px;font-size:11.5px;line-height:16px;font-weight:normal;font-style:normal;color:#000;transform:scaleX(1.1000);">anno</span>
<span class="t" style="left:29.40px;top:88px;font-size:11.5px;line-height:16px;font-weight:normal;font-style:normal;color:#838383;transform:scaleX(1.1123);">Trimestrale</span>
<span class="t" style="left:190.40px;top:88px;font-size:11.5px;line-height:16px;font-weight:normal;font-style:normal;color:#838383;transform:scaleX(1.1160);">2008</span>
<span class="t" style="left:151.30px;top:89px;font-size:11.5px;line-height:16px;font-weight:normal;font-style:normal;color:#8C8636;transform:scaleX(1.0375);">OK</span>
<span class="t" style="left:340.00px;top:63px;font-size:11.5px;line-height:16px;font-weight:normal;font-style:italic;color:#000;transform:scaleX(1.1284);">Selezionare il o i periodi da elaborare, cliccando sull'ultimo mese interessato (colonna periodo).</span>
<span class="t" style="left:316.00px;top:76px;font-size:11.5px;line-height:16px;font-weight:normal;font-style:italic;color:#000;transform:scaleX(1.1229);">Per annullare tutte le selezioni, cliccare sull'intestazione colonna periodo. Per aprire un periodo chiuso o</span>
<span class="t" style="left:342.50px;top:89px;font-size:11.5px;line-height:16px;font-weight:normal;font-style:italic;color:#000;transform:scaleX(1.1297);">cancellare tutto, cliccare il tasto destro del mouse e scegliere dal menu la funzione desiderata.</span>
<span class="t" style="left:722.77px;top:120px;font-size:12.3px;line-height:18px;font-weight:bold;font-style:normal;color:#000;transform:scaleX(1.2293);">Registri-Giornale</span>
<span class="t" style="left:27.18px;top:160px;font-size:11.5px;line-height:16px;font-weight:normal;font-style:normal;color:#000;transform:scaleX(1.1158);">Registri</span>
<span class="t" style="left:83.40px;top:158px;font-size:11.5px;line-height:16px;font-weight:normal;font-style:normal;color:#000;transform:scaleX(1.1347);">Comunicazioni trimestrali Iva</span>
<span class="t" style="left:263.50px;top:160px;font-size:11.5px;line-height:16px;font-weight:normal;font-style:normal;color:#000;transform:scaleX(1.0930);">Giornale</span>
<span class="t" style="left:36.20px;top:180px;font-size:11.5px;line-height:16px;font-weight:normal;font-style:normal;color:#000;transform:scaleX(1.1176);">Contribuente e responsabile della trasmissione</span>
<span class="t" style="left:36.00px;top:201px;font-size:11.5px;line-height:16px;font-weight:normal;font-style:normal;color:#000;transform:scaleX(1.1426);">Contribuente: cod.fis.</span>
<span class="t" style="left:173.30px;top:200px;font-size:11.5px;line-height:16px;font-weight:normal;font-style:normal;color:#000;transform:scaleX(1.0914);">00247100217</span>
<span class="t" style="left:328.33px;top:201px;font-size:11.5px;line-height:16px;font-weight:normal;font-style:normal;color:#000;transform:scaleX(1.1739);">p.iva</span>
<span class="t" style="left:370.30px;top:200px;font-size:11.5px;line-height:16px;font-weight:normal;font-style:normal;color:#000;transform:scaleX(1.0814);">00247100217</span>
<span class="t" style="left:481.35px;top:201px;font-size:11.5px;line-height:16px;font-weight:normal;font-style:normal;color:#000;transform:scaleX(1.1535);">Dichiarante: cod.fis.</span>
<span class="t" style="left:609.28px;top:200px;font-size:11.5px;line-height:16px;font-weight:normal;font-style:normal;color:#000;transform:scaleX(1.0233);">MRDSFR51S03A952Y</span>
<span class="t" style="left:770.50px;top:201px;font-size:11.5px;line-height:16px;font-weight:normal;font-style:normal;color:#000;transform:scaleX(1.0962);">cod.carica</span>
<span class="t" style="left:841.51px;top:201px;font-size:11.5px;line-height:16px;font-weight:normal;font-style:normal;color:#000;transform:scaleX(1.0850);">1</span>
<span class="t" style="left:36.00px;top:228px;font-size:11.5px;line-height:16px;font-weight:normal;font-style:normal;color:#000;transform:scaleX(1.1226);">cod.fiscale intermediario</span>
<span class="t" style="left:192.50px;top:227px;font-size:11.5px;line-height:16px;font-weight:normal;font-style:normal;color:#000;transform:scaleX(1.0857);">01076130218</span>
<span class="t" style="left:329.30px;top:228px;font-size:11.5px;line-height:16px;font-weight:normal;font-style:normal;color:#000;transform:scaleX(1.1091);">tipo imepgno</span>
<span class="t" style="left:418.37px;top:227px;font-size:11.5px;line-height:16px;font-weight:normal;font-style:normal;color:#000;transform:scaleX(1.1282);">1 com. predisposta dal contribuente</span>
<span class="t" style="left:692.50px;top:228px;font-size:11.5px;line-height:16px;font-weight:normal;font-style:normal;color:#000;transform:scaleX(1.1232);">data impegno</span>
<span class="t" style="left:782.70px;top:228px;font-size:11.5px;line-height:16px;font-weight:normal;font-style:normal;color:#000;transform:scaleX(1.1018);">21.06.2017</span>
<span class="t" style="left:55.47px;top:252px;font-size:11.5px;line-height:16px;font-weight:normal;font-style:normal;color:#000;transform:scaleX(1.1308);">liquidazioni trimestrali ai sensi dell'art.7 D.P.R. 14.ott.1999 n. 542</span>
<span class="t" style="left:926.20px;top:233px;font-size:11.5px;line-height:16px;font-weight:normal;font-style:normal;color:#000;transform:scaleX(1.0963);">salva</span>
<span class="t" style="left:906.29px;top:246px;font-size:11.5px;line-height:16px;font-weight:normal;font-style:normal;color:#000;transform:scaleX(1.1097);">impostazioni</span>
<span class="t" style="left:36.20px;top:284px;font-size:11.5px;line-height:16px;font-weight:bold;font-style:normal;color:#000;transform:scaleX(1.1616);">Comunicazioni telematiche (XML) trimestrali</span>
<span class="t" style="left:55.00px;top:323px;font-size:11.5px;line-height:16px;font-weight:normal;font-style:normal;color:#000;transform:scaleX(1.1100);">gennaio</span>
<span class="t" style="left:55.00px;top:343px;font-size:11.5px;line-height:16px;font-weight:normal;font-style:normal;color:#000;transform:scaleX(1.1100);">febbraio</span>
<span class="t" style="left:53.89px;top:363px;font-size:11.5px;line-height:16px;font-weight:normal;font-style:normal;color:#000;transform:scaleX(1.1100);">marzo</span>
<span class="t" style="left:55.00px;top:383px;font-size:11.5px;line-height:16px;font-weight:normal;font-style:normal;color:#000;transform:scaleX(1.1100);">aprile</span>
<span class="t" style="left:53.89px;top:403px;font-size:11.5px;line-height:16px;font-weight:normal;font-style:normal;color:#000;transform:scaleX(1.1100);">maggio</span>
<span class="t" style="left:55.00px;top:423px;font-size:11.5px;line-height:16px;font-weight:normal;font-style:normal;color:#000;transform:scaleX(1.1100);">giugno</span>
<span class="t" style="left:53.89px;top:443px;font-size:11.5px;line-height:16px;font-weight:normal;font-style:normal;color:#000;transform:scaleX(1.1100);">luglio</span>
<span class="t" style="left:55.00px;top:463px;font-size:11.5px;line-height:16px;font-weight:normal;font-style:normal;color:#000;transform:scaleX(1.1100);">agosto</span>
<span class="t" style="left:55.00px;top:483px;font-size:11.5px;line-height:16px;font-weight:normal;font-style:normal;color:#000;transform:scaleX(1.1100);">settembre</span>
<span class="t" style="left:55.00px;top:503px;font-size:11.5px;line-height:16px;font-weight:normal;font-style:normal;color:#000;transform:scaleX(1.1100);">ottobre</span>
<span class="t" style="left:53.89px;top:523px;font-size:11.5px;line-height:16px;font-weight:normal;font-style:normal;color:#000;transform:scaleX(1.1100);">novembre</span>
<span class="t" style="left:55.00px;top:543px;font-size:11.5px;line-height:16px;font-weight:normal;font-style:normal;color:#000;transform:scaleX(1.1100);">dicembre</span>
<span class="t" style="left:55.16px;top:303px;font-size:11.5px;line-height:16px;font-weight:normal;font-style:normal;color:#000;transform:scaleX(1.1378);">periodo</span>
<span class="t" style="left:193.50px;top:303px;font-size:11.5px;line-height:16px;font-weight:normal;font-style:normal;color:#000;transform:scaleX(1.1525);">totale vend.</span>
<span class="t" style="left:273.50px;top:303px;font-size:11.5px;line-height:16px;font-weight:normal;font-style:normal;color:#000;transform:scaleX(1.1635);">totale acq.</span>
<span class="t" style="left:352.34px;top:303px;font-size:11.5px;line-height:16px;font-weight:normal;font-style:normal;color:#000;transform:scaleX(1.1600);">iva Debito</span>
<span class="t" style="left:424.35px;top:303px;font-size:11.5px;line-height:16px;font-weight:normal;font-style:normal;color:#000;transform:scaleX(1.1481);">iva Credito</span>
<span class="t" style="left:498.50px;top:303px;font-size:11.5px;line-height:16px;font-weight:normal;font-style:normal;color:#000;transform:scaleX(1.1100);">saldo a deb</span>
<span class="t" style="left:570.30px;top:303px;font-size:11.5px;line-height:16px;font-weight:normal;font-style:normal;color:#000;transform:scaleX(1.1100);">saldo a cre</span>
<span class="t" style="left:642.50px;top:303px;font-size:11.5px;line-height:16px;font-weight:normal;font-style:normal;color:#000;transform:scaleX(1.1100);">debito prec</span>
<span class="t" style="left:710.30px;top:303px;font-size:11.5px;line-height:16px;font-weight:normal;font-style:normal;color:#000;transform:scaleX(1.1100);">credito per.</span>
<span class="t" style="left:782.50px;top:303px;font-size:11.5px;line-height:16px;font-weight:normal;font-style:normal;color:#000;transform:scaleX(1.1100);">credito ann</span>
<span class="t" style="left:854.30px;top:303px;font-size:11.5px;line-height:16px;font-weight:normal;font-style:normal;color:#000;transform:scaleX(1.1100);">vers.auto U</span>
<span class="t" style="left:926.30px;top:303px;font-size:11.5px;line-height:16px;font-weight:normal;font-style:normal;color:#000;transform:scaleX(1.1100);">altri crediti-</span>
<span class="t" style="left:997.19px;top:303px;font-size:11.5px;line-height:16px;font-weight:normal;font-style:normal;color:#000;transform:scaleX(1.1100);">interessi</span>
<span class="t" style="left:1053.30px;top:303px;font-size:11.5px;line-height:16px;font-weight:normal;font-style:normal;color:#000;transform:scaleX(1.1100);">acconto dic.</span>
<span class="t" style="left:1125.50px;top:303px;font-size:11.5px;line-height:16px;font-weight:normal;font-style:normal;color:#000;transform:scaleX(1.1100);">da versare</span>
<span class="t" style="left:1196.19px;top:303px;font-size:11.5px;line-height:16px;font-weight:normal;font-style:normal;color:#000;transform:scaleX(1.1100);">nuovo cred</span>
<span class="t" style="left:192.30px;top:363px;font-size:11.5px;line-height:16px;font-weight:normal;font-style:normal;color:#000;transform:scaleX(1.0940);">2.779,57</span>
<span class="t" style="left:272.30px;top:363px;font-size:11.5px;line-height:16px;font-weight:normal;font-style:normal;color:#000;transform:scaleX(1.0940);">0,00</span>
<span class="t" style="left:352.30px;top:363px;font-size:11.5px;line-height:16px;font-weight:normal;font-style:normal;color:#000;transform:scaleX(1.0940);">265,54</span>
<span class="t" style="left:424.30px;top:363px;font-size:11.5px;line-height:16px;font-weight:normal;font-style:normal;color:#000;transform:scaleX(1.0940);">0,00</span>
<span class="t" style="left:496.30px;top:363px;font-size:11.5px;line-height:16px;font-weight:normal;font-style:normal;color:#000;transform:scaleX(1.0940);">265,54</span>
<span class="t" style="left:996.30px;top:363px;font-size:11.5px;line-height:16px;font-weight:normal;font-style:normal;color:#000;transform:scaleX(1.0940);">2,66</span>
<span class="t" style="left:1123.30px;top:363px;font-size:11.5px;line-height:16px;font-weight:normal;font-style:normal;color:#000;transform:scaleX(1.0940);">268,20</span>
<span class="t" style="left:192.30px;top:423px;font-size:11.5px;line-height:16px;font-weight:normal;font-style:normal;color:#000;transform:scaleX(1.0940);">6.080,84</span>
<span class="t" style="left:271.21px;top:423px;font-size:11.5px;line-height:16px;font-weight:normal;font-style:normal;color:#000;transform:scaleX(1.0940);">10.000,00</span>
<span class="t" style="left:351.21px;top:423px;font-size:11.5px;line-height:16px;font-weight:normal;font-style:normal;color:#000;transform:scaleX(1.0940);">1.166,28</span>
<span class="t" style="left:423.21px;top:423px;font-size:11.5px;line-height:16px;font-weight:normal;font-style:normal;color:#000;transform:scaleX(1.0940);">1.000,00</span>
<span class="t" style="left:495.21px;top:423px;font-size:11.5px;line-height:16px;font-weight:normal;font-style:normal;color:#000;transform:scaleX(1.0940);">166,28</span>
<span class="t" style="left:852.30px;top:423px;font-size:11.5px;line-height:16px;font-weight:normal;font-style:normal;color:#000;transform:scaleX(1.0940);">660,00</span>
<span class="t" style="left:1195.30px;top:423px;font-size:11.5px;line-height:16px;font-weight:normal;font-style:normal;color:#000;transform:scaleX(1.0940);">493,72</span>
<span class="t" style="left:30.30px;top:595px;font-size:11.5px;line-height:16px;font-weight:normal;font-style:normal;color:#000;transform:scaleX(1.0939);">cartella file XML</span>
<span class="t" style="left:133.30px;top:595px;font-size:11.5px;line-height:16px;font-weight:normal;font-style:normal;color:#000;transform:scaleX(1.1412);">C:\Users\sieg\Documents\Import+Export\LiqIva XML</span>
<span class="t" style="left:567.06px;top:595px;font-size:11.5px;line-height:16px;font-weight:normal;font-style:normal;color:#000;transform:scaleX(1.4375);">...</span>
<span class="t" style="left:606.16px;top:596px;font-size:11.5px;line-height:16px;font-weight:normal;font-style:normal;color:#000;transform:scaleX(1.1393);">prog.trasmissione</span>
<span class="t" style="left:722.30px;top:595px;font-size:11.5px;line-height:16px;font-weight:normal;font-style:normal;color:#000;transform:scaleX(1.0850);">0</span>
<span class="t" style="left:837.50px;top:594px;font-size:11.5px;line-height:16px;font-weight:normal;font-style:normal;color:#000;transform:scaleX(1.1290);">debug</span>
</body></html>
